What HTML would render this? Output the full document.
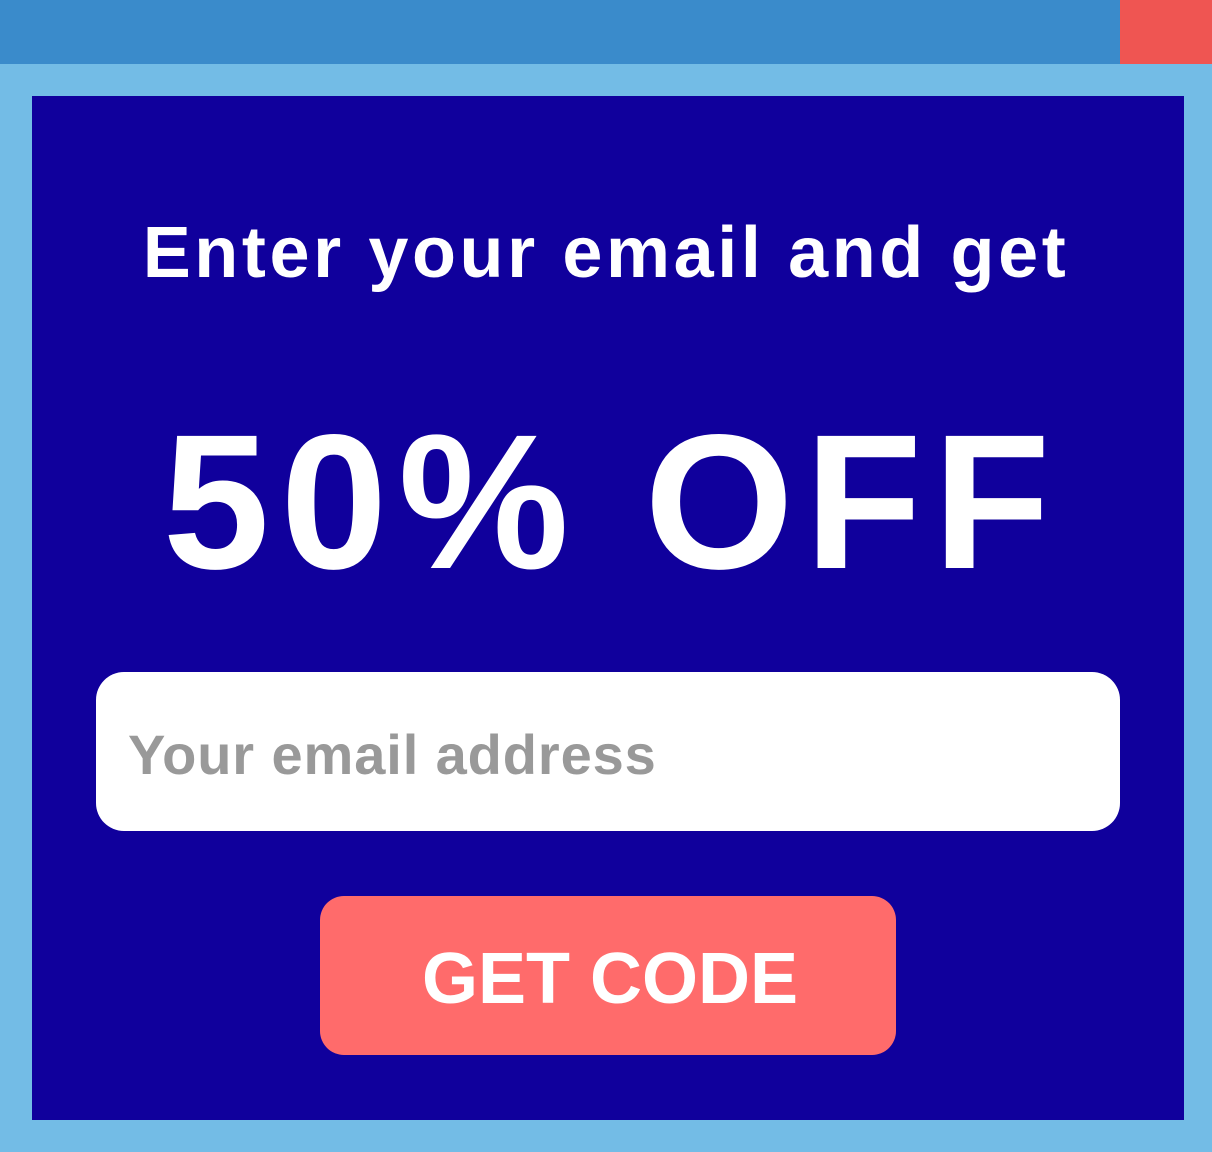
<!DOCTYPE html>
<html><head><style>
html,body{margin:0;padding:0;}
body{width:1212px;height:1152px;position:relative;overflow:hidden;background:#73BCE6;font-family:"Liberation Sans",sans-serif;}
.top{position:absolute;left:0;top:0;width:1212px;height:64px;background:#3A8BCB;}
.red{position:absolute;left:1120px;top:0;width:92px;height:64px;background:#EF5552;}
.panel{position:absolute;left:32px;top:96px;width:1152px;height:1024px;background:#10009C;}
.t{position:absolute;left:0;width:1212px;text-align:center;color:#fff;font-weight:bold;white-space:nowrap;}
.h1{top:212px;font-size:72px;letter-spacing:3.6px;}
.h2{top:396px;font-size:192px;letter-spacing:11px;line-height:1.1;}
.input{position:absolute;left:96px;top:672px;width:1024px;height:159px;background:#fff;border-radius:28px;}
.ph{position:absolute;left:128px;top:722px;font-size:56px;font-weight:bold;color:#999;white-space:nowrap;letter-spacing:0.9px;}
.btn{position:absolute;left:320px;top:896px;width:576px;height:159px;background:#FF6B6B;border-radius:24px;}
.bt{top:938px;font-size:72px;}
</style></head><body>
<div class="top"></div><div class="red"></div>
<div class="panel"></div>
<div class="t h1">Enter your email and get</div>
<div class="t h2" style="left:6px">50% OFF</div>
<div class="input"></div>
<div class="ph">Your email address</div>
<div class="btn"></div>
<div class="t bt" style="left:4px">GET CODE</div>
</body></html>
